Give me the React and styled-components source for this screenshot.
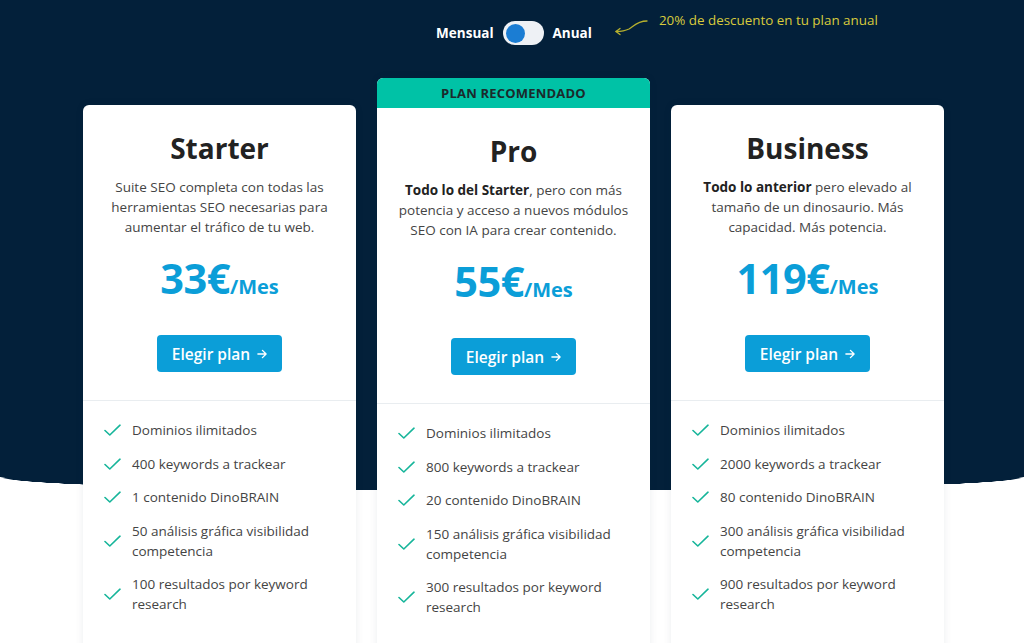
import React from 'react';
import styled, { createGlobalStyle } from 'styled-components';

const navy = "#03203a";
const blue = "#0b9ed8";
const teal = "#16b59a";

const plans = [
    {
        name: "Starter",
        desc: [<>Suite SEO completa con todas las</>, <>herramientas SEO necesarias para</>, <>aumentar el tráfico de tu web.</>],
        price: "33€",
        features: ["Dominios ilimitados", "400 keywords a trackear", "1 contenido DinoBRAIN", "50 análisis gráfica visibilidad competencia", "100 resultados por keyword research"]
    },
    {
        name: "Pro",
        featured: true,
        desc: [<><b>Todo lo del Starter</b>, pero con más</>, <>potencia y acceso a nuevos módulos</>, <>SEO con IA para crear contenido.</>],
        price: "55€",
        features: ["Dominios ilimitados", "800 keywords a trackear", "20 contenido DinoBRAIN", "150 análisis gráfica visibilidad competencia", "300 resultados por keyword research"]
    },
    {
        name: "Business",
        desc: [<><b>Todo lo anterior</b> pero elevado al</>, <>tamaño de un dinosaurio. Más</>, <>capacidad. Más potencia.</>],
        price: "119€",
        features: ["Dominios ilimitados", "2000 keywords a trackear", "80 contenido DinoBRAIN", "300 análisis gráfica visibilidad competencia", "900 resultados por keyword research"]
    }
];

function Check() {
    return (
        <CheckIcon viewBox="0 0 17 12">
            <polyline points="1,6.5 5.8,11 16,1.2" fill="none" stroke={teal} strokeWidth="1.6" strokeLinecap="round" strokeLinejoin="round" />
        </CheckIcon>
    );
}

function Arrow() {
    return (
        <ArrowIcon viewBox="0 0 36 18">
            <path d="M34 3 C24 3 21 8 16 11 C12 13 8 13.5 3 13.5" fill="none" stroke="#b7b12e" strokeWidth="1.3" strokeLinecap="round" />
            <path d="M7 10.5 L3 13.5 L7 16.5" fill="none" stroke="#b7b12e" strokeWidth="1.3" strokeLinecap="round" strokeLinejoin="round" />
        </ArrowIcon>
    );
}

function ButtonArrow() {
    return (
        <BtnArrowIcon viewBox="0 0 11 10">
            <path d="M1 5 H10 M6 1 L10 5 L6 9" fill="none" stroke="#ffffff" strokeWidth="1.5" strokeLinecap="round" strokeLinejoin="round" />
        </BtnArrowIcon>
    );
}

function PlanCard({ plan }) {
    return (
        <Card featured={plan.featured}>
            {plan.featured && <Badge>PLAN RECOMENDADO</Badge>}
            <Top>
                <Title>{plan.name}</Title>
                <Desc>
                    {plan.desc.map((line, i) => <span key={i}>{line}</span>)}
                </Desc>
                <Price>
                    {plan.price}<Per>/Mes</Per>
                </Price>
                <Button>Elegir plan <ButtonArrow /></Button>
            </Top>
            <Features>
                {plan.features.map((f, i) => (
                    <Feature key={i}>
                        <Check />
                        <span>{f}</span>
                    </Feature>
                ))}
            </Features>
        </Card>
    );
}

export default function App() {
    return (
        <Page>
            <GlobalStyle />
            <ToggleRow>
                <ToggleLabel>Mensual</ToggleLabel>
                <Switch><Knob /></Switch>
                <ToggleLabel>Anual</ToggleLabel>
                <Note>
                    <Arrow />
                    <span>20% de descuento en tu plan anual</span>
                </Note>
            </ToggleRow>
            <Cards>
                {plans.map(p => <PlanCard key={p.name} plan={p} />)}
            </Cards>
        </Page>
    );
}

const GlobalStyle = createGlobalStyle`
    body {
        margin: 0;
        font-family: "Open Sans", "Noto Sans", sans-serif;
        background: #ffffff;
    }
    * { box-sizing: border-box; }
`

const Page = styled.div`
    min-height: 643px;
    padding-top: 21px;
    background:
        radial-gradient(ellipse 50% 14px at 50% 477px, ${navy} 99%, transparent 100%),
        linear-gradient(${navy} 477px, #ffffff 477px);
    overflow: hidden;
`

const ToggleRow = styled.div`
    position: relative;
    display: flex;
    align-items: center;
    justify-content: center;
    gap: 9px;
    width: max-content;
    margin: 0 auto;
    height: 24px;
    transform: translateX(2px);
`

const ToggleLabel = styled.span`
    color: #ffffff;
    font-weight: 700;
    font-size: 13.5px;
`

const Switch = styled.div`
    width: 41px;
    height: 24px;
    border-radius: 12px;
    background: #eef1f5;
    display: flex;
    align-items: center;
    padding: 0 3px;
`

const Knob = styled.div`
    width: 19px;
    height: 19px;
    border-radius: 50%;
    background: #1b7dd3;
`

const Note = styled.div`
    position: absolute;
    left: calc(100% + 21px);
    top: -11px;
    display: flex;
    align-items: flex-start;
    gap: 10px;
    white-space: nowrap;
    color: #d8cb3c;
    font-size: 13.4px;
    line-height: 20px;
`

const ArrowIcon = styled.svg`
    width: 36px;
    height: 18px;
    margin-top: 8px;
`

const Cards = styled.div`
    display: flex;
    justify-content: center;
    align-items: flex-start;
    gap: 21px;
    margin-top: 33px;
    padding-left: 3px;
`

const Card = styled.div`
    width: 273px;
    margin-top: ${p => p.featured ? "0" : "27px"};
    background: #ffffff;
    border-radius: 6px;
    box-shadow: 0 0 8px rgba(20, 40, 60, 0.08);
    overflow: hidden;
    padding-bottom: 40px;
`

const Badge = styled.div`
    height: 30px;
    background: #00c2a6;
    color: #1b2a2c;
    font-weight: 700;
    font-size: 13px;
    letter-spacing: 0.2px;
    display: flex;
    align-items: center;
    justify-content: center;
`

const Top = styled.div`
    display: flex;
    flex-direction: column;
    align-items: center;
    padding: 25px 16px 28px;
    border-bottom: 1px solid #e9edf0;
`

const Title = styled.div`
    font-size: 28px;
    line-height: 36px;
    font-weight: 700;
    color: #222222;
`

const Desc = styled.div`
    margin-top: 11px;
    font-size: 13.5px;
    line-height: 20px;
    color: #444444;
    text-align: center;
    display: flex;
    flex-direction: column;
    b { font-weight: 700; color: #222222; }
`

const Price = styled.div`
    margin-top: 17px;
    font-size: 41.5px;
    line-height: 48px;
    font-weight: 700;
    color: ${blue};
    letter-spacing: -0.5px;
`

const Per = styled.span`
    font-size: 20px;
    letter-spacing: 0;
`

const Button = styled.button`
    margin-top: 24px;
    height: 37px;
    padding: 0 15px;
    display: flex;
    align-items: center;
    gap: 7px;
    border: none;
    border-radius: 4px;
    background: ${blue};
    color: #ffffff;
    font-family: inherit;
    font-size: 15.5px;
    font-weight: 600;
    cursor: pointer;
`

const BtnArrowIcon = styled.svg`
    width: 10px;
    height: 10px;
`

const Features = styled.ul`
    list-style: none;
    margin: 0;
    padding: 19px 24px 0 21px;
    display: flex;
    flex-direction: column;
    gap: 13.5px;
`

const Feature = styled.li`
    display: flex;
    align-items: center;
    gap: 11px;
    font-size: 13.5px;
    line-height: 20px;
    color: #444444;
`

const CheckIcon = styled.svg`
    flex: none;
    width: 17px;
    height: 12px;
`
